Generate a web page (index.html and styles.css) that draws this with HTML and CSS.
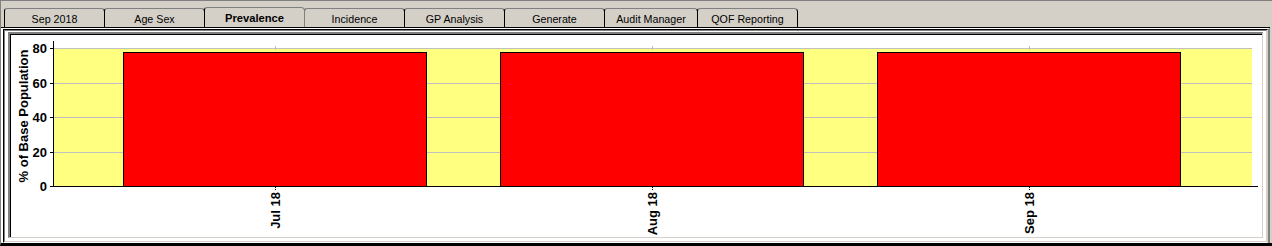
FILE: index.html
```html
<!DOCTYPE html>
<html>
<head>
<meta charset="utf-8">
<link rel="stylesheet" href="styles.css">
</head>
<body>
<div class="window">
  <div class="tabstrip">
    <div class="tab">Sep 2018</div>
    <div class="tab">Age Sex</div>
    <div class="tab selected">Prevalence</div>
    <div class="tab">Incidence</div>
    <div class="tab">GP Analysis</div>
    <div class="tab">Generate</div>
    <div class="tab narrow">Audit Manager</div>
    <div class="tab">QOF Reporting</div>
  </div>
  <div class="page">
    <div class="fb"><div class="fc"><div class="fd"><div class="fe">
      <svg class="chart" width="1251" height="202" viewBox="0 0 1251 202">
        <rect x="42" y="13" width="1199" height="138" fill="#ffff80"/>
        <g stroke="#c0c0c0" stroke-width="1">
          <line x1="42" y1="13.5" x2="1241" y2="13.5"/>
          <line x1="42" y1="48.5" x2="1241" y2="48.5"/>
          <line x1="42" y1="82.5" x2="1241" y2="82.5"/>
          <line x1="42" y1="117.5" x2="1241" y2="117.5"/>
          <line x1="264.5" y1="11" x2="264.5" y2="15"/>
          <line x1="641.5" y1="11" x2="641.5" y2="15"/>
          <line x1="1018.5" y1="11" x2="1018.5" y2="15"/>
        </g>
        <g fill="#ff0000" stroke="#000" stroke-width="1">
          <rect x="112.5" y="17.5" width="303" height="134"/>
          <rect x="489.5" y="17.5" width="303" height="134"/>
          <rect x="866.5" y="17.5" width="303" height="134"/>
        </g>
        <g stroke="#000" stroke-width="1">
          <line x1="42.5" y1="6" x2="42.5" y2="152"/>
          <line x1="42" y1="151.5" x2="1247" y2="151.5"/>
          <line x1="39" y1="13.5" x2="42" y2="13.5"/>
          <line x1="39" y1="48.5" x2="42" y2="48.5"/>
          <line x1="39" y1="82.5" x2="42" y2="82.5"/>
          <line x1="39" y1="117.5" x2="42" y2="117.5"/>
          <line x1="39" y1="151.5" x2="42" y2="151.5"/>
          <line x1="264.5" y1="152" x2="264.5" y2="156" stroke-dasharray="1 1"/>
          <line x1="641.5" y1="152" x2="641.5" y2="156" stroke-dasharray="1 1"/>
          <line x1="1018.5" y1="152" x2="1018.5" y2="156" stroke-dasharray="1 1"/>
        </g>
        <g class="lbl" text-anchor="end">
          <text x="36" y="18">80</text>
          <text x="36" y="53">60</text>
          <text x="36" y="87">40</text>
          <text x="36" y="122">20</text>
          <text x="36" y="156">0</text>
          <text transform="translate(269,157) rotate(-90)">Jul 18</text>
          <text transform="translate(646,157) rotate(-90)">Aug 18</text>
          <text transform="translate(1023,157) rotate(-90)">Sep 18</text>
        </g>
        <text class="lbl" text-anchor="middle" transform="translate(17,81) rotate(-90)">% of Base Population</text>
      </svg>
    </div></div></div></div>
  </div>
</div>
</body>
</html>
```

FILE: styles.css
```css
html, body {
  margin: 0;
  padding: 0;
  background: #d4d0c8;
}
.window {
  width: 1272px;
  height: 246px;
  box-sizing: border-box;
  background: #d4d0c8;
  border-top: 1px solid #808080;
  border-left: 1px solid #808080;
  border-bottom: 3px solid #000;
  padding-right: 2px;
  display: flex;
  flex-direction: column;
  font-family: "Liberation Sans", Arial, sans-serif;
}
.tabstrip {
  height: 26px;
  border-bottom: 1px solid #000;
  padding-left: 3px;
  display: flex;
  align-items: flex-end;
}
.tab {
  width: 101px;
  height: 19px;
  box-sizing: border-box;
  margin-right: -1px;
  background: #d4d0c8;
  border: 1px solid #000;
  border-top-color: #808080;
  border-bottom: none;
  border-radius: 3px 4px 0 0;
  font-size: 10.7px;
  color: #000;
  display: flex;
  align-items: center;
  justify-content: center;
  padding-top: 1px;
}
.tab.narrow {
  width: 94px;
}
.tab.selected {
  height: 20px;
  font-weight: bold;
  font-size: 11.2px;
  border-right-color: #808080;
  position: relative;
  z-index: 1;
}
.page {
  flex: 1;
  display: flex;
  border-top: 1px solid #fff;
  border-left: 2px solid #fff;
  border-right: 2px solid #808080;
}
.fb {
  flex: 1;
  display: flex;
  border-top: 1px solid #000;
  border-left: 1px solid #000;
  border-right: 1px solid #d4d0c8;
  border-bottom: 1px solid #fff;
}
.fc {
  flex: 1;
  display: flex;
  background: #fff;
  border-top: 1px solid #808080;
  border-left: 1px solid #808080;
  border-right: 1px solid #d4d0c8;
  border-bottom: 1px solid #d4d0c8;
  padding: 1px 3px 3px 3px;
}
.fd {
  flex: 1;
  display: flex;
  border-top: 2px solid #808080;
  border-left: 2px solid #808080;
  border-right: 1px solid #d4d0c8;
  border-bottom: 1px solid #d4d0c8;
}
.fe {
  flex: 1;
  display: flex;
  background: #fff;
  border-top: 1px solid #000;
  border-left: 1px solid #000;
}
.chart {
  display: block;
}
.lbl {
  font-family: "Liberation Sans", Arial, sans-serif;
  font-weight: bold;
  font-size: 13px;
  fill: #000;
}
```
